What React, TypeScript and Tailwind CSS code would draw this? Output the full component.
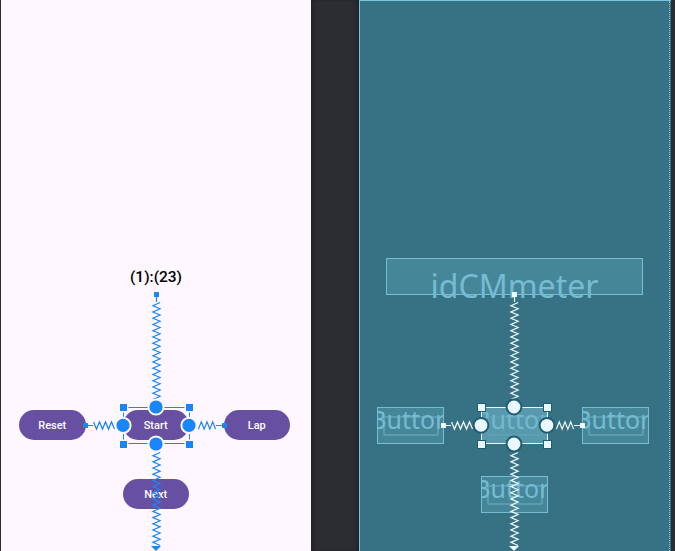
import React from "react";

type Dir = "v" | "h";

// Points of a spring constraint that runs along one axis.
function spring(dir: Dir, fixed: number, from: number, to: number, count: number, first: number, amp = 3.6) {
  const step = (to - from) / count;
  const pts: string[] = [];
  for (let i = 0; i < count; i++) {
    const along = from + step * (i + 0.5);
    const side = fixed + (i % 2 === 0 ? first : -first) * amp;
    pts.push(dir === "v" ? `${side},${along}` : `${along},${side}`);
  }
  return pts.join(" ");
}

function Constraints({ x, color, halo, dot, border, haloSize, radius }: { x: number; color: string; halo: string; dot: string; border: string; haloSize: number; radius: number }) {
  const handles = [[-32.5, 407.5], [33.5, 407.5], [-32.5, 444.5], [33.5, 444.5]];
  const circles = [[0, 407], [0, 444], [-33, 425.3], [33, 425.3]];
  return (
    <svg className="absolute inset-0 h-[551px] w-full" fill="none">
      <g transform={`translate(${x} 0)`}>
        <path d="M-32.5 407.5H33.5V443.5H-32.5Z" stroke={border} />
        <g stroke={color} strokeWidth="1.2">
          <path d="M.5 295V302M-70 425.5H-63M60 425.5H69" />
          <polyline points={spring("v", 0.5, 301, 401, 32, 1)} />
          <polyline points={spring("v", 0.5, 451, 547, 31, 1)} />
          <polyline points={spring("h", 425.5, -64, -40, 8, -1)} />
          <polyline points={spring("h", 425.5, 41, 61, 7, 1)} />
        </g>
        <g fill={color}>
          <rect x="-2" y="292" width="5" height="5" rx=".6" />
          <rect x="-73" y="423" width="5" height="5" rx=".6" />
          <rect x="66" y="423" width="5" height="5" rx=".6" />
          <path d="M-5 546H5L0 551Z" />
        </g>
        {handles.map(([cx, cy]) => (
          <g key={`${cx}-${cy}`}>
            <rect x={cx - 3.5 - haloSize} y={cy - 3.5 - haloSize} width={7 + haloSize * 2} height={7 + haloSize * 2} fill={halo} />
            <rect x={cx - 3.5} y={cy - 3.5} width="7" height="7" fill={dot} />
          </g>
        ))}
        {circles.map(([cx, cy]) => (
          <circle key={`${cx}-${cy}`} cx={cx} cy={cy} r={radius} fill={dot} stroke={halo} strokeWidth="2" />
        ))}
      </g>
    </svg>
  );
}

function DesignButton({ label, place }: { label: string; place: string }) {
  return (
    <div className={`absolute flex h-[30.5px] w-[66.5px] items-center justify-center rounded-full bg-[#6750a2] pt-px font-[Roboto,sans-serif] text-[11px] leading-[13px] font-medium text-white ${place}`}>
      {label}
    </div>
  );
}

function BlueprintButton({ place, selected = false }: { place: string; selected?: boolean }) {
  return (
    <div className={`absolute h-[37px] w-[67px] overflow-hidden border ${selected ? "border-transparent bg-[#5899ad] text-[#72b9d0]" : "border-[#78bdd4] bg-[#468699] text-[#75bcd3]"} ${place}`}>
      <div className={`absolute top-[8px] left-[5px] h-[20px] w-[56px] rounded-[2px] border-2 ${selected ? "border-[#60a3b7]/60" : "border-[#5a9db2]"}`} />
      <div className="absolute top-[-5px] left-1/2 -translate-x-1/2 font-['Noto_Sans','Open_Sans',sans-serif] text-[25px] leading-[32px] whitespace-nowrap">Button</div>
    </div>
  );
}

export default function App() {
  return (
    <main className="flex h-[551px] w-[675px] overflow-hidden bg-[#2b2d30]">
      <section className="relative ml-px h-full w-[310px] shrink-0 bg-[#fef7ff] pt-[267px]">
        <p className="text-center font-[Roboto,sans-serif] text-[15.5px] leading-[20px] font-medium text-black">(1):(23)</p>
        <DesignButton label="Reset" place="top-[409.5px] left-[18px]" />
        <DesignButton label="Start" place="top-[409.5px] left-[121.5px]" />
        <DesignButton label="Lap" place="top-[409.5px] left-[222.5px]" />
        <DesignButton label="Next" place="top-[478.5px] left-[121.5px]" />
        <Constraints x={155} color="#1886f7" halo="#fef7ff" dot="#1886f7" border="#1886f7" haloSize={1.5} radius={7.6} />
      </section>
      <div className="h-full w-[48px] shrink-0 bg-[#2b2d30] shadow-[inset_4px_0_4px_-3px_#1c1d20,inset_-4px_0_4px_-3px_#1c1d20]" />
      <section className="relative h-full w-[312px] shrink-0 border-t border-l border-[#78c5dd] bg-[#377284] pt-[257px]">
        <div className="absolute inset-y-0 right-px border-r border-dotted border-[#78c5dd]" />
        <div className="ml-[26px] flex h-[37px] w-[257px] justify-center border border-[#78bdd4] bg-[#468699]">
          <span className="mt-[3px] font-['Noto_Sans','Open_Sans',sans-serif] text-[32px] leading-[48px] text-[#75bcd3]">idCMmeter</span>
        </div>
        <BlueprintButton place="top-[406px] left-[17px]" />
        <BlueprintButton place="top-[406px] left-[121px]" selected />
        <BlueprintButton place="top-[406px] left-[222px]" />
        <BlueprintButton place="top-[475px] left-[121px]" />
        <div className="absolute -top-px -left-px h-[551px] w-[312px]">
          <Constraints x={155} color="#f2fbfe" halo="#215d70" dot="#eaf9ff" border="#eaf9ff" haloSize={1} radius={7.4} />
        </div>
      </section>
    </main>
  );
}
